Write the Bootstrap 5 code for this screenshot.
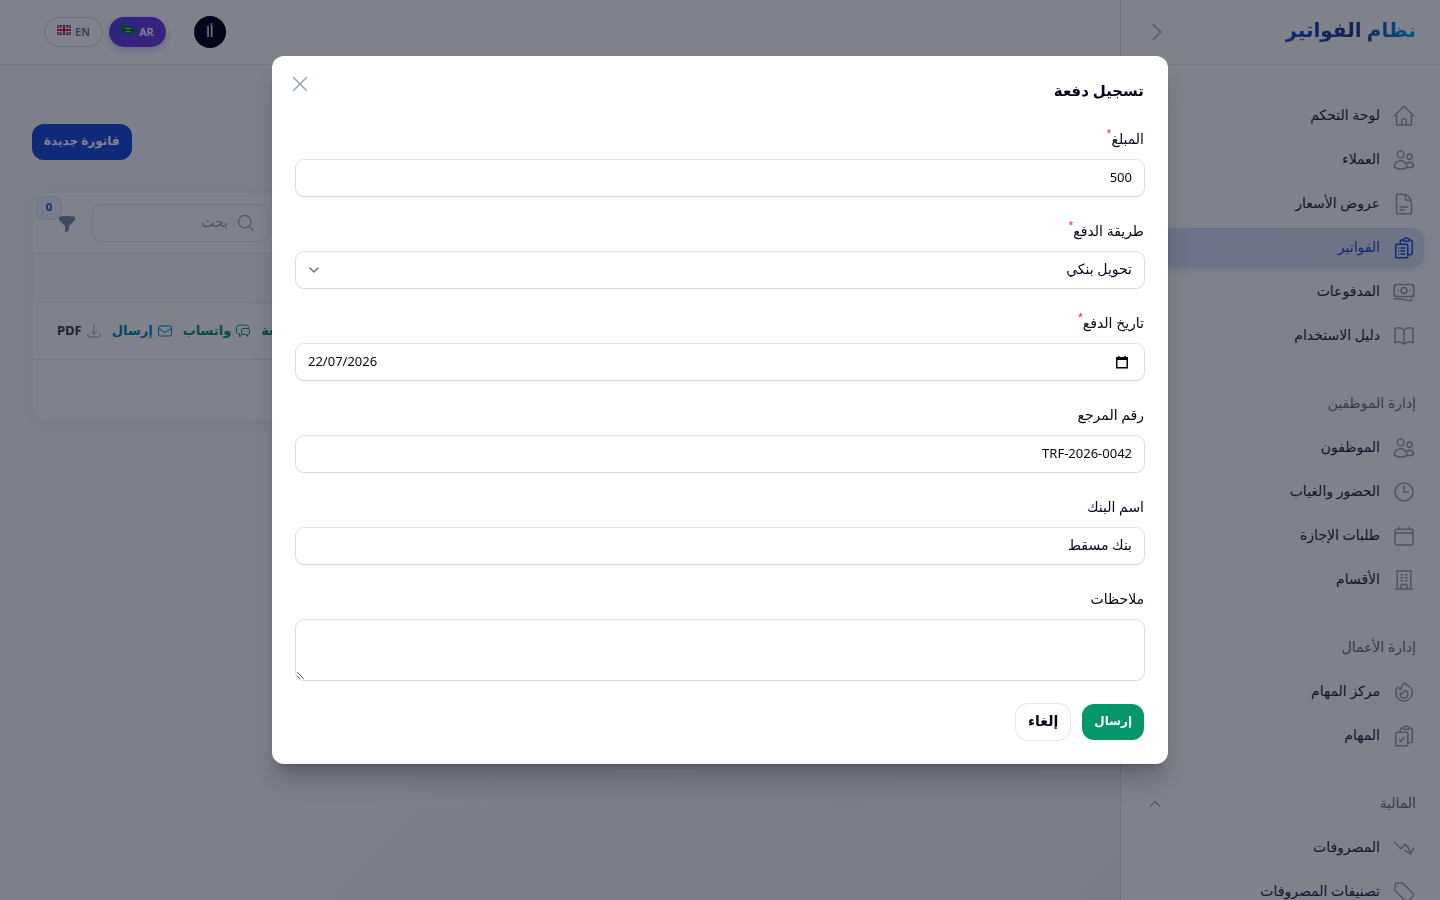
<!DOCTYPE html>
<html lang="ar" dir="rtl">
<head>
<meta charset="utf-8">
<meta name="viewport" content="width=device-width, initial-scale=1">
<title>نظام الفواتير</title>
<link href="https://cdn.jsdelivr.net/npm/bootstrap@5.3.0/dist/css/bootstrap.min.css" rel="stylesheet">
<style>
  :root { --ink: #020617; --muted: #94a3b8; --line: #e2e8f0; --blue: #1d4ed8; }
  body { font-family: "Noto Sans", "DejaVu Sans", sans-serif; font-size: 14px; line-height: 20px; color: var(--ink);
         background: linear-gradient(135deg, #f8fafc 0%, #f8f8fe 50%, #eff4fc 100%); overflow: hidden; }
  svg.icon { width: 24px; height: 24px; fill: none; stroke: currentColor; stroke-width: 1.5; stroke-linecap: round; stroke-linejoin: round; flex: none; }
  svg.icon.icon-sm { width: 16px; height: 16px; }
  svg.icon.icon-md { width: 20px; height: 20px; }
  svg.icon.soft { color: var(--muted); }
  svg.solid { fill: currentColor; stroke: none; }
  .flag { width: 14px; height: 10px; flex: none; margin-bottom: 4px; }
  a { text-decoration: none; }

  .side { width: 320px; background: #fff; border-left: 1px solid #dbe4f5; }
  .bar { height: 65px; border-bottom: 1px solid var(--line); }
  .brand-name { font-size: 20px; line-height: 28px; font-weight: 700; padding-bottom: 4px; color: transparent; -webkit-background-clip: text; background-clip: text;
                background-image: linear-gradient(90deg, #1d4ed8 0%, #1e3a8a 50%, #0ea5e9 100%); }
  .side-nav { padding: 31px 16px 32px; gap: 28px; }
  .side-link { height: 40px; padding: 0 8px; gap: 12px; color: #1e293b; border-radius: 12px; }
  .side-link svg.icon { color: var(--muted); }
  .side-link.active { color: var(--blue); background: linear-gradient(90deg, #d5e0fa, #dbe2f0); box-shadow: 0 2px 8px rgba(37,99,235,.15); }
  .side-link.active svg.icon { color: var(--blue); }
  .side-title { height: 40px; padding: 0 8px; color: #64748b; font-size: 14px; }
  .label-line { padding-bottom: 2px; }

  .topbar { background: #fff; padding-left: 44px; gap: 28px; }
  .switcher { gap: 6px; }
  .lang { height: 30px; min-width: 57px; padding: 0 12px; border-radius: 15px; font-size: 11px; line-height: 16px; font-weight: 600; color: #64748b; border: 1px solid #cbd5e1; background: #fff; }
  .lang.active { color: #fff; border: 0; background: linear-gradient(135deg, #4f46e5, #7c3aed); box-shadow: 0 3px 8px rgba(99,70,229,.3); }
  .avatar { width: 32px; height: 32px; background: var(--ink); color: #fff; }

  .act { height: 36px; padding: 0 12px 2px; border-radius: 12px; font-size: 12px; line-height: 20px; font-weight: 700; border: 0; }
  .act-blue { background: #1d4ed8; color: #fff; }
  .act-green { background: #059669; color: #fff; }
  .act-plain { background: #fff; color: var(--ink); font-size: 14px; box-shadow: 0 0 0 1px rgba(2,6,23,.1); }
  .page { padding: 59px 32px 32px; gap: 33px; }
  .sheet { background: #fff; border-radius: 16px; margin: 0 1px; box-shadow: 0 0 0 1px #f1f3fb, 0 2px 12px rgba(59,80,200,.1); }
  .sheet-tools { height: 61px; padding: 0 24px; gap: 16px; border-bottom: 1px solid var(--line); }
  .sheet-head { height: 49px; background: #f9faff; border-bottom: 1px solid var(--line); }
  .sheet-row { height: 57px; padding: 0 24px; gap: 10px; border-bottom: 1px solid var(--line); font-size: 13px; font-weight: 700; }
  .sheet-foot { height: 60px; }
  .search { width: 175px; height: 36px; padding: 0 12px; gap: 8px; border-radius: 8px; box-shadow: 0 0 0 1px rgba(2,6,23,.1); color: var(--muted); }
  .search input { border: 0; outline: 0; background: none; min-width: 0; width: 100%; padding: 0 0 2px; }
  .search input::placeholder { color: var(--muted); }
  .filter { width: 20px; color: #7a8ba5; border: 0; background: none; padding: 0; }
  .filter-count { position: absolute; left: -21px; top: -16px; width: 26px; height: 24px; border-radius: 9px; font-size: 11px; line-height: 20px; font-weight: 700; color: var(--blue); background: #eff4ff; border: 1px solid #d3defb; }
  .tone-green { color: #059669; }
  .tone-sky { color: #0284c7; }
  .tone-slate { color: #334155; }

  .shade { background: rgba(2,6,23,.5); z-index: 1050; }
  .modal-dialog { max-width: 896px; margin: 56px auto; }
  .modal-content { border: 0; border-radius: 12px; padding: 24px; gap: 24px; box-shadow: 0 20px 25px -5px rgba(0,0,0,.2), 0 8px 10px -6px rgba(0,0,0,.2); }
  .modal-title { font-size: 15px; line-height: 20px; font-weight: 700; height: 24px; }
  .close-x { position: absolute; left: 16px; top: 16px; color: var(--muted); border: 0; background: none; padding: 0; line-height: 0; }
  .field label { display: block; height: 24px; margin-bottom: 8px; line-height: 22px; }
  .field sup { color: #e11d48; font-size: 9px; top: -8px; }
  .field .form-control, .field .form-select { height: 36px; border: 0; border-radius: 8px; padding: 0 12px 3px; font-size: 14px; line-height: 20px; color: var(--ink);
      box-shadow: 0 0 0 1px rgba(2,6,23,.12), 0 1px 2px rgba(2,6,23,.05); background-color: #fff; }
  .field .form-control.latin { font-size: 13px; }
  .field .form-select { background-position: left 12px center; background-size: 12px 12px;
      background-image: url("data:image/svg+xml,%3Csvg xmlns='http://www.w3.org/2000/svg' viewBox='0 0 12 12'%3E%3Cpath fill='none' stroke='%236b7280' stroke-width='1.5' stroke-linecap='round' stroke-linejoin='round' d='m2 4 4 4 4-4'/%3E%3C/svg%3E"); }
  .field textarea.form-control { height: 60px; padding: 8px 12px; }
  .picker { position: absolute; right: 14px; top: 10px; color: #000; border: 0; background: none; padding: 0; line-height: 0; }
  .foot { gap: 12px; }
</style>
</head>
<body>
<div class="d-flex vh-100">
  <aside class="side d-flex flex-column flex-shrink-0 overflow-hidden">
    <div class="bar d-flex align-items-center justify-content-between flex-shrink-0 px-4">
      <a href="#" class="brand-name">نظام الفواتير</a>
      <button class="btn p-0 border-0 lh-1" aria-label="طي القائمة"><svg class="icon soft" viewBox="0 0 24 24"><path d="m8.25 4.5 7.5 7.5-7.5 7.5"/></svg></button>
    </div>
    <nav class="side-nav d-flex flex-column">
      <div class="d-flex flex-column gap-1">
        <a href="#" class="side-link d-flex align-items-center"><svg class="icon" viewBox="0 0 24 24"><path d="M2.25 12l8.954-8.955c.44-.439 1.152-.439 1.591 0L21.75 12M4.5 9.75v10.125c0 .621.504 1.125 1.125 1.125H9.75v-4.875c0-.621.504-1.125 1.125-1.125h2.25c.621 0 1.125.504 1.125 1.125V21h4.125c.621 0 1.125-.504 1.125-1.125V9.75M8.25 21h8.25"/></svg><span class="label-line">لوحة التحكم</span></a>
        <a href="#" class="side-link d-flex align-items-center"><svg class="icon" viewBox="0 0 24 24"><use href="#people"/></svg><span class="label-line">العملاء</span></a>
        <a href="#" class="side-link d-flex align-items-center"><svg class="icon" viewBox="0 0 24 24"><path d="M19.5 14.25v-2.625a3.375 3.375 0 0 0-3.375-3.375h-1.5A1.125 1.125 0 0 1 13.5 7.125v-1.5a3.375 3.375 0 0 0-3.375-3.375H8.25m0 12.75h7.5m-7.5 3H12M10.5 2.25H5.625c-.621 0-1.125.504-1.125 1.125v17.25c0 .621.504 1.125 1.125 1.125h12.75c.621 0 1.125-.504 1.125-1.125V11.25a9 9 0 0 0-9-9Z"/></svg><span class="label-line">عروض الأسعار</span></a>
        <a href="#" class="side-link active d-flex align-items-center"><svg class="icon" viewBox="0 0 24 24"><path d="M9 12h3.75M9 15h3.75M9 18h3.75m3 .75H18a2.25 2.25 0 0 0 2.25-2.25V6.108c0-1.135-.845-2.098-1.976-2.192a48.424 48.424 0 0 0-1.123-.08m-5.801 0c-.065.21-.1.433-.1.664 0 .414.336.75.75.75h4.5a.75.75 0 0 0 .75-.75 2.25 2.25 0 0 0-.1-.664m-5.8 0A2.251 2.251 0 0 1 13.5 2.25H15c1.012 0 1.867.668 2.15 1.586m-5.8 0c-.376.023-.75.05-1.124.08C9.095 4.01 8.25 4.973 8.25 6.108V8.25m0 0H4.875c-.621 0-1.125.504-1.125 1.125v11.25c0 .621.504 1.125 1.125 1.125h9.75c.621 0 1.125-.504 1.125-1.125V9.375c0-.621-.504-1.125-1.125-1.125H8.25ZM6.75 12h.008v.008H6.75V12Zm0 3h.008v.008H6.75V15Zm0 3h.008v.008H6.75V18Z"/></svg><span class="label-line">الفواتير</span></a>
        <a href="#" class="side-link d-flex align-items-center"><svg class="icon" viewBox="0 0 24 24"><path d="M2.25 18.75a60.07 60.07 0 0 1 15.797 2.101c.727.198 1.453-.342 1.453-1.096V18.75M3.75 4.5v.75A.75.75 0 0 1 3 6h-.75m0 0v-.375c0-.621.504-1.125 1.125-1.125H20.25M2.25 6v9m18-10.5v.75c0 .414.336.75.75.75h.75m-1.5-1.5h.375c.621 0 1.125.504 1.125 1.125v9.75c0 .621-.504 1.125-1.125 1.125h-.375m1.5-1.5H21a.75.75 0 0 0-.75.75v.75m0 0H3.75m0 0h-.375a1.125 1.125 0 0 1-1.125-1.125V15m1.5 1.5v-.75A.75.75 0 0 0 3 15h-.75M15 10.5a3 3 0 1 1-6 0 3 3 0 0 1 6 0Zm3 0h.008v.008H18V10.5Zm-12 0h.008v.008H6V10.5Z"/></svg><span class="label-line">المدفوعات</span></a>
        <a href="#" class="side-link d-flex align-items-center"><svg class="icon" viewBox="0 0 24 24"><path d="M12 6.042A8.967 8.967 0 0 0 6 3.75c-1.052 0-2.062.18-3 .512v14.25A8.987 8.987 0 0 1 6 18c2.305 0 4.408.867 6 2.292m0-14.25a8.966 8.966 0 0 1 6-2.292c1.052 0 2.062.18 3 .512v14.25A8.987 8.987 0 0 0 18 18a8.967 8.967 0 0 0-6 2.292m0-14.25v14.25"/></svg><span class="label-line">دليل الاستخدام</span></a>
      </div>
      <div class="d-flex flex-column gap-1">
        <div class="side-title d-flex align-items-center"><span class="label-line">إدارة الموظفين</span></div>
        <a href="#" class="side-link d-flex align-items-center"><svg class="icon" viewBox="0 0 24 24"><path id="people" d="M15 19.128a9.38 9.38 0 0 0 2.625.372 9.337 9.337 0 0 0 4.121-.952 4.125 4.125 0 0 0-7.533-2.493M15 19.128v-.003c0-1.113-.285-2.16-.786-3.07M15 19.128v.106A12.318 12.318 0 0 1 8.624 21c-2.331 0-4.512-.645-6.374-1.766l-.001-.109a6.375 6.375 0 0 1 11.964-3.07M12 6.375a3.375 3.375 0 1 1-6.75 0 3.375 3.375 0 0 1 6.75 0Zm8.25 2.25a2.625 2.625 0 1 1-5.25 0 2.625 2.625 0 0 1 5.25 0Z"/></svg><span class="label-line">الموظفون</span></a>
        <a href="#" class="side-link d-flex align-items-center"><svg class="icon" viewBox="0 0 24 24"><path d="M12 6v6h4.5m4.5 0a9 9 0 1 1-18 0 9 9 0 0 1 18 0Z"/></svg><span class="label-line">الحضور والغياب</span></a>
        <a href="#" class="side-link d-flex align-items-center"><svg class="icon" viewBox="0 0 24 24"><path d="M6.75 3v2.25M17.25 3v2.25M3 18.75V7.5a2.25 2.25 0 0 1 2.25-2.25h13.5A2.25 2.25 0 0 1 21 7.5v11.25m-18 0A2.25 2.25 0 0 0 5.25 21h13.5A2.25 2.25 0 0 0 21 18.75m-18 0v-7.5A2.25 2.25 0 0 1 5.25 9h13.5A2.25 2.25 0 0 1 21 11.25v7.5"/></svg><span class="label-line">طلبات الإجازة</span></a>
        <a href="#" class="side-link d-flex align-items-center"><svg class="icon" viewBox="0 0 24 24"><path d="M3.75 21h16.5M4.5 3h15M5.25 3v18m13.5-18v18M9 6.75h1.5m-1.5 3h1.5m-1.5 3h1.5m3-6H15m-1.5 3H15m-1.5 3H15M9 21v-3.375c0-.621.504-1.125 1.125-1.125h3.75c.621 0 1.125.504 1.125 1.125V21"/></svg><span class="label-line">الأقسام</span></a>
      </div>
      <div class="d-flex flex-column gap-1">
        <div class="side-title d-flex align-items-center"><span class="label-line">إدارة الأعمال</span></div>
        <a href="#" class="side-link d-flex align-items-center"><svg class="icon" viewBox="0 0 24 24"><path d="M15.362 5.214A8.252 8.252 0 0 1 12 21 8.25 8.25 0 0 1 6.038 7.047 8.287 8.287 0 0 0 9 9.601a8.983 8.983 0 0 1 3.361-6.867 8.21 8.21 0 0 0 3 2.48Z"/><path d="M12 18a3.75 3.75 0 0 0 .495-7.468 5.99 5.99 0 0 0-1.925 3.547 5.975 5.975 0 0 1-2.133-1.001A3.75 3.75 0 0 0 12 18Z"/></svg><span class="label-line">مركز المهام</span></a>
        <a href="#" class="side-link d-flex align-items-center"><svg class="icon" viewBox="0 0 24 24"><path d="M11.35 3.836c-.065.21-.1.433-.1.664 0 .414.336.75.75.75h4.5a.75.75 0 0 0 .75-.75 2.25 2.25 0 0 0-.1-.664m-5.8 0A2.251 2.251 0 0 1 13.5 2.25H15c1.012 0 1.867.668 2.15 1.586m-5.8 0c-.376.023-.75.05-1.124.08C9.095 4.01 8.25 4.973 8.25 6.108V8.25m8.9-4.414c.376.023.75.05 1.124.08 1.131.094 1.976 1.057 1.976 2.192V16.5A2.25 2.25 0 0 1 18 18.75h-2.25m-7.5-10.5H4.875c-.621 0-1.125.504-1.125 1.125v11.25c0 .621.504 1.125 1.125 1.125h9.75c.621 0 1.125-.504 1.125-1.125V18.75m-7.5-10.5h6.375c.621 0 1.125.504 1.125 1.125v9.375m-8.25-3 1.5 1.5 3-3.75"/></svg><span class="label-line">المهام</span></a>
      </div>
      <div class="d-flex flex-column gap-1">
        <button class="side-title d-flex align-items-center justify-content-between border-0 bg-transparent"><span class="label-line">المالية</span><svg class="icon icon-md soft" viewBox="0 0 24 24"><path d="m6.500 14.500 5.500-5.500 5.500 5.500"/></svg></button>
        <a href="#" class="side-link d-flex align-items-center"><svg class="icon" viewBox="0 0 24 24"><path d="M2.25 6 9 12.75l4.286-4.286a11.948 11.948 0 0 1 4.306 6.43l.776 2.898m0 0 3.182-5.511m-3.182 5.51-5.511-3.181"/></svg><span class="label-line">المصروفات</span></a>
        <a href="#" class="side-link d-flex align-items-center"><svg class="icon" viewBox="0 0 24 24"><path d="M9.568 3H5.25A2.25 2.25 0 0 0 3 5.25v4.318c0 .597.237 1.17.659 1.591l9.581 9.581c.699.699 1.78.872 2.607.33a18.095 18.095 0 0 0 5.223-5.223c.542-.827.369-1.908-.33-2.607L11.16 3.66A2.25 2.25 0 0 0 9.568 3ZM6 6h.008v.008H6V6Z"/></svg><span class="label-line">تصنيفات المصروفات</span></a>
      </div>
    </nav>
  </aside>

  <div class="flex-grow-1 d-flex flex-column overflow-hidden">
    <header class="bar topbar d-flex align-items-center justify-content-end flex-shrink-0">
      <button class="avatar rounded-circle border-0 p-0">أا</button>
      <div class="d-flex switcher">
        <button class="lang active d-flex align-items-center justify-content-center gap-1" dir="ltr"><svg class="flag" viewBox="0 0 14 10"><path fill="#0f7a3d" d="M0 1q4-1.500 7 0t7 0v8q-4 1.500-7 0t-7 0z"/><path stroke="#fff" stroke-width="1" opacity=".7" d="M4 3.500h6M5 6.500h4"/></svg>AR</button>
        <button class="lang d-flex align-items-center justify-content-center gap-1" dir="ltr"><svg class="flag" viewBox="0 0 14 10"><path fill="#22408f" d="M0 0h14v10H0z"/><path stroke="#fff" stroke-width="2" d="m0 0 14 10M14 0 0 10"/><path stroke="#d5203a" stroke-width="1" d="m0 0 14 10M14 0 0 10"/><path stroke="#fff" stroke-width="4" d="M7 0v10M0 5h14"/><path stroke="#d5203a" stroke-width="2" d="M7 0v10M0 5h14"/></svg>EN</button>
      </div>
    </header>
    <main class="page d-flex flex-column">
      <div class="d-flex justify-content-end"><button class="act act-blue">فاتورة جديدة</button></div>
      <section class="sheet">
        <div class="sheet-tools d-flex align-items-center justify-content-end">
          <label class="search d-flex align-items-center"><svg class="icon icon-md" viewBox="0 0 24 24"><path d="m21 21-5.197-5.197m0 0A7.500 7.500 0 1 0 5.196 5.196a7.500 7.500 0 0 0 10.607 10.607Z"/></svg><input type="search" placeholder="بحث" aria-label="بحث"></label>
          <button class="filter position-relative" aria-label="تصفية"><svg class="icon icon-md solid" viewBox="0 0 24 24"><path d="M3.792 2.938A49.069 49.069 0 0 1 12 2.250c2.797 0 5.540.236 8.209.688a1.857 1.857 0 0 1 1.541 1.836v1.044a3 3 0 0 1-.879 2.121l-6.182 6.182a1.500 1.500 0 0 0-.439 1.061v2.927a3 3 0 0 1-1.658 2.684l-1.757.878A.75.75 0 0 1 9.750 21v-5.818a1.500 1.500 0 0 0-.44-1.060L3.130 7.938a3 3 0 0 1-.879-2.121V4.774c0-.897.64-1.683 1.542-1.836Z"/></svg><span class="filter-count">0</span></button>
        </div>
        <div class="sheet-head"></div>
        <div class="sheet-row d-flex align-items-center justify-content-end">
          <a href="#" class="tone-green d-flex align-items-center"><span class="label-line">تسجيل دفعة</span></a>
          <a href="#" class="tone-green d-flex align-items-center gap-1"><svg class="icon icon-sm" viewBox="0 0 24 24"><path d="M20.250 8.511c.884.284 1.500 1.128 1.500 2.097v4.286c0 1.136-.847 2.100-1.980 2.193-.34.027-.68.052-1.020.072v3.091l-3-3c-1.354 0-2.694-.055-4.020-.163a2.115 2.115 0 0 1-.825-.242m9.345-8.334a2.126 2.126 0 0 0-.476-.095 48.640 48.640 0 0 0-8.048 0c-1.131.094-1.976 1.057-1.976 2.192v4.286c0 .837.46 1.580 1.155 1.951m9.345-8.334V6.637c0-1.621-1.152-3.026-2.760-3.235A48.455 48.455 0 0 0 11.250 3c-2.115 0-4.198.137-6.240.402-1.608.209-2.760 1.614-2.760 3.235v6.226c0 1.621 1.152 3.026 2.760 3.235.577.075 1.157.140 1.740.194V21l4.155-4.155"/></svg><span class="label-line">واتساب</span></a>
          <a href="#" class="tone-sky d-flex align-items-center gap-1"><svg class="icon icon-sm" viewBox="0 0 24 24"><path d="M21.750 6.750v10.500a2.250 2.250 0 0 1-2.250 2.250h-15a2.250 2.250 0 0 1-2.250-2.250V6.750m19.500 0A2.250 2.250 0 0 0 19.500 4.500h-15a2.250 2.250 0 0 0-2.250 2.250m19.500 0v.243a2.250 2.250 0 0 1-1.070 1.916l-7.500 4.615a2.250 2.250 0 0 1-2.360 0L3.320 8.910a2.250 2.250 0 0 1-1.070-1.916V6.750"/></svg><span class="label-line">إرسال</span></a>
          <a href="#" class="tone-slate d-flex align-items-center gap-1"><svg class="icon icon-sm soft" viewBox="0 0 24 24"><path d="M3 16.500v2.250A2.250 2.250 0 0 0 5.250 21h13.500A2.250 2.250 0 0 0 21 18.750V16.500M16.500 12 12 16.500m0 0L7.500 12m4.500 4.500V3"/></svg><span class="label-line">PDF</span></a>
        </div>
        <div class="sheet-foot"></div>
      </section>
    </main>
  </div>
</div>

<div class="shade position-fixed top-0 start-0 w-100 h-100"></div>
<div class="modal d-block" tabindex="-1" role="dialog" aria-labelledby="dlgTitle">
  <div class="modal-dialog">
    <form class="modal-content">
      <h2 class="modal-title m-0" id="dlgTitle">تسجيل دفعة</h2>
      <button type="button" class="close-x" aria-label="إغلاق"><svg class="icon" viewBox="0 0 24 24"><path d="M5.500 18.500 18.500 5.500M5.500 5.500l13 13"/></svg></button>
      <div class="field"><label for="amount">المبلغ<sup>*</sup></label><input id="amount" class="form-control latin" type="text" inputmode="decimal" value="500"></div>
      <div class="field"><label for="method">طريقة الدفع<sup>*</sup></label><select id="method" class="form-select"><option>تحويل بنكي</option></select></div>
      <div class="field">
        <label for="paid">تاريخ الدفع<sup>*</sup></label>
        <div class="position-relative">
          <input id="paid" class="form-control latin" type="text" inputmode="numeric" dir="ltr" value="22/07/2026">
          <button type="button" class="picker" aria-label="اختيار التاريخ"><svg width="16" height="16" viewBox="0 0 16 16" fill="none" stroke="currentColor"><path stroke-width="1.500" d="M2.750 3.750h10.500v10H2.750z"/><path stroke-width="3" d="M2 4.500h12"/><path stroke-width="1.500" d="M4.750 2v2M11.250 2v2"/></svg></button>
        </div>
      </div>
      <div class="field"><label for="ref">رقم المرجع</label><input id="ref" class="form-control latin" type="text" value="TRF-2026-0042"></div>
      <div class="field"><label for="bank">اسم البنك</label><input id="bank" class="form-control" type="text" value="بنك مسقط"></div>
      <div class="field"><label for="notes">ملاحظات</label><textarea id="notes" class="form-control d-block"></textarea></div>
      <div class="d-flex foot"><button type="submit" class="act act-green">إرسال</button><button type="button" class="act act-plain">إلغاء</button></div>
    </form>
  </div>
</div>
<script src="https://cdn.jsdelivr.net/npm/bootstrap@5.3.0/dist/js/bootstrap.bundle.min.js"></script>
</body>
</html>
